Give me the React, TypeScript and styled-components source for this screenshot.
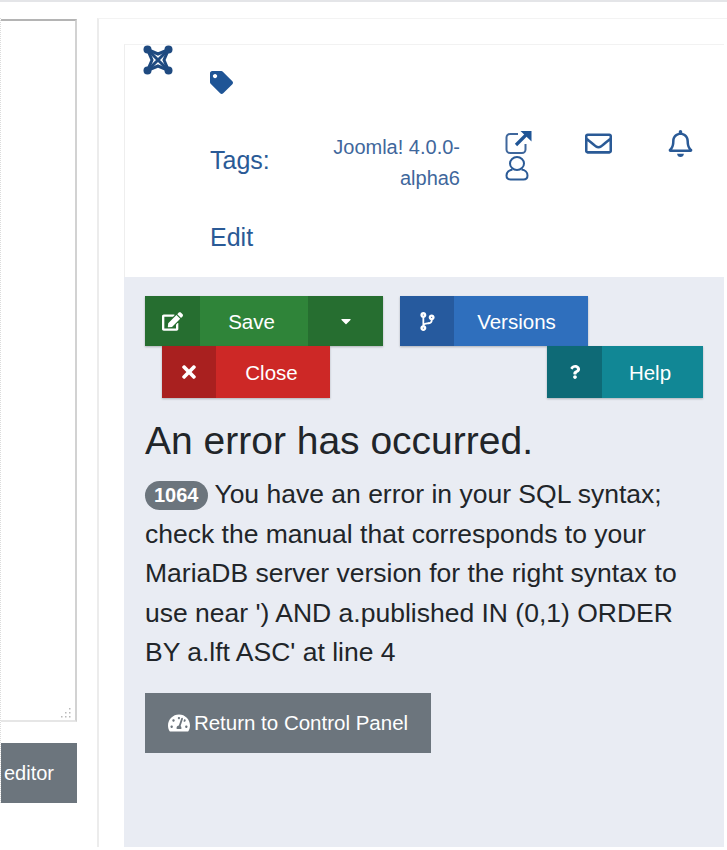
import React from "react";
import styled, { createGlobalStyle } from "styled-components";
import {
  FaEdit,
  FaCaretDown,
  FaTimes,
  FaQuestion,
  FaCodeBranch,
  FaTachometerAlt,
  FaTag,
  FaRegEnvelope,
  FaRegBell,
} from "react-icons/fa";

const GlobalStyle = createGlobalStyle`
  html, body {
    margin: 0;
    padding: 0;
    background: #fff;
    overflow: hidden;
  }
  * {
    box-sizing: border-box;
  }
`;

const JoomlaMark = () => (
  <svg width="30" height="30" viewBox="0 0 30 30" fill="none" stroke="#1f4a80" strokeWidth="3">
    <path d="M4.500 4.500 25.500 25.500M25.500 4.500 4.500 25.500" />
    <path d="M4.500 4.500 15 9 25.500 4.500 21 15 25.500 25.500 15 21 4.500 25.500 9 15Z" />
    <g fill="#1f4a80" stroke="none">
      <circle cx="4.500" cy="4.500" r="4" />
      <circle cx="25.500" cy="4.500" r="4" />
      <circle cx="4.500" cy="25.500" r="4" />
      <circle cx="25.500" cy="25.500" r="4" />
    </g>
  </svg>
);

const ExternalIcon = () => (
  <svg width="27" height="25" viewBox="0 0 27 25" fill="none">
    <path d="M13 4H5a3.500 3.500 0 0 0-3.500 3.500v12A3.500 3.500 0 0 0 5 23h12a3.500 3.500 0 0 0 3.500-3.500V14" stroke="#3f679c" strokeWidth="2" />
    <path d="M11 15 21 5" stroke="#1f5596" strokeWidth="3.200" />
    <path d="M15.500 1H26.500V11.500Z" fill="#1f5596" />
  </svg>
);

const UserIcon = () => (
  <svg width="24" height="25" viewBox="0 0 24 25" fill="none" stroke="#2a5a96" strokeWidth="2">
    <ellipse cx="12" cy="7.500" rx="7" ry="6.500" />
    <path d="M7.500 13.500C4 14 1.500 16.500 1.500 19.500 1.500 22 3 23.500 5.500 23.500H18.500C21 23.500 22.500 22 22.500 19.500 22.500 16.500 20 14 16.500 13.500" />
  </svg>
);

const ResizeGrip = () => (
  <svg width="12" height="12" viewBox="0 0 12 12" fill="#b9b9b9">
    <rect x="9" y="1" width="1.500" height="1.500" />
    <rect x="5" y="5" width="1.500" height="1.500" />
    <rect x="9" y="5" width="1.500" height="1.500" />
    <rect x="1" y="9" width="1.500" height="1.500" />
    <rect x="5" y="9" width="1.500" height="1.500" />
    <rect x="9" y="9" width="1.500" height="1.500" />
  </svg>
);

export default function App() {
  return (
    <>
      <GlobalStyle />
      <Page>
        <LeftColumn>
          <EditorBox>
            <Grip>
              <ResizeGrip />
            </Grip>
          </EditorBox>
          <ToggleButton>editor</ToggleButton>
        </LeftColumn>
        <Frame>
          <Header>
            <Logo>
              <JoomlaMark />
            </Logo>
            <HeaderBody>
              <TagIcon>
                <FaTag size={23} />
              </TagIcon>
              <InfoRow>
                <NavLabel>Tags:</NavLabel>
                <Version>Joomla! 4.0.0-alpha6</Version>
                <IconCell $width={80} $offset={45}>
                  <ExternalIcon />
                  <UserGlyph>
                    <UserIcon />
                  </UserGlyph>
                </IconCell>
                <IconCell $width={82}>
                  <FaRegEnvelope size={27} />
                </IconCell>
                <IconCell $width={27}>
                  <FaRegBell size={27} />
                </IconCell>
              </InfoRow>
              <NavLabel>Edit</NavLabel>
            </HeaderBody>
          </Header>
          <Content>
            <Toolbar>
              <ToolRow $gap={17} $height={50}>
                <ActionButton $body="#2f8439" $tab="#266e30" $width={238}>
                  <IconTab $width={55}><FaEdit size={21} /></IconTab>
                  <Label>Save</Label>
                  <CaretTab>
                    <FaCaretDown size={16} />
                  </CaretTab>
                </ActionButton>
                <ActionButton $body="#2f6fbd" $tab="#265a9e" $width={188}>
                  <IconTab><FaCodeBranch size={19} /></IconTab>
                  <Label $shift={9}>Versions</Label>
                </ActionButton>
              </ToolRow>
              <ToolRow $gap={217} $indent={17} $height={52}>
                <ActionButton $body="#cd2826" $tab="#a9201f" $width={168}>
                  <IconTab><FaTimes size={20} /></IconTab>
                  <Label $shift={3}>Close</Label>
                </ActionButton>
                <ActionButton $body="#118795" $tab="#0e6a76" $width={156}>
                  <IconTab $width={55}><FaQuestion size={14} /></IconTab>
                  <Label>Help</Label>
                </ActionButton>
              </ToolRow>
            </Toolbar>
            <Title>An error has occurred.</Title>
            <Message>
              <Badge>1064</Badge> You have an error in your SQL syntax; check the manual that corresponds to your MariaDB server version for the right syntax to use near ') AND a.published IN (0,1) ORDER BY a.lft ASC' at line 4
            </Message>
            <ReturnButton>
              <FaTachometerAlt size={22} />
              Return to Control Panel
            </ReturnButton>
          </Content>
        </Frame>
      </Page>
    </>
  );
}

const Page = styled.div`
  display: flex;
  width: 727px;
  height: 850px;
  padding-top: 16px;
  border-top: 2px solid #e4e5e8;
  background: #fff;
  font-family: "Liberation Sans", Arial, sans-serif;
  overflow: hidden;
`;

const LeftColumn = styled.div`
  display: flex;
  flex-direction: column;
  width: 77px;
  height: 785px;
  border-left: 1px dotted #dcdcdc;
  flex-shrink: 0;
`;

const EditorBox = styled.div`
  display: flex;
  align-items: flex-end;
  justify-content: flex-end;
  height: 704px;
  margin-top: 1px;
  border-top: 2px solid #b4b4b4;
  border-right: 2px solid #d2d2d2;
  border-bottom: 2px solid #e6e6e6;
  padding: 0 3px 1px 0;
`;

const Grip = styled.div`
  display: flex;
`;

const ToggleButton = styled.div`
  display: flex;
  align-items: center;
  height: 60px;
  margin-top: 21px;
  padding-left: 3px;
  background: #6c757d;
  color: #fff;
  font-size: 20px;
`;

const Frame = styled.div`
  display: flex;
  flex-direction: column;
  width: 630px;
  height: 829px;
  margin-left: 20px;
  padding: 25px 0 0 25px;
  border-left: 2px solid #ececec;
  border-top: 1px solid #f3f3f3;
`;

const Header = styled.header`
  display: flex;
  width: 600px;
  height: 233px;
  border-top: 1px solid #f2f2f2;
  border-left: 1px solid #eeeeee;
  background: #fff;
  color: #1f5596;
`;

const Logo = styled.div`
  display: flex;
  align-items: flex-start;
  width: 85px;
  padding-left: 18px;
`;

const HeaderBody = styled.div`
  display: flex;
  flex-direction: column;
  align-items: flex-start;
  flex: 1;
`;

const TagIcon = styled.div`
  display: flex;
  height: 85px;
  padding-top: 26px;
  color: #1f5596;
`;

const InfoRow = styled.div`
  display: flex;
  align-items: flex-start;
  height: 77px;
`;

const NavLabel = styled.div`
  width: 90px;
  padding-top: 14px;
  color: #2a5a96;
  font-size: 25px;
  line-height: 32px;
`;

const Version = styled.div`
  width: 160px;
  padding-top: 2px;
  text-align: right;
  color: #3f679c;
  font-size: 20px;
  line-height: 31px;
`;

const IconCell = styled.div<{ $width: number; $offset?: number }>`
  display: flex;
  flex-direction: column;
  align-items: flex-start;
  width: ${({ $width }) => $width}px;
  margin-left: ${({ $offset }) => $offset ?? 0}px;
  color: #2a5a96;
`;

const UserGlyph = styled.div`
  display: flex;
  margin-top: 1px;
`;

const Content = styled.main`
  width: 600px;
  height: 570px;
  padding: 19px 21px 0 21px;
  background: #e9ecf3;
`;

const Toolbar = styled.div`
  display: flex;
  flex-direction: column;
`;

const ToolRow = styled.div<{ $gap: number; $indent?: number; $height: number }>`
  display: flex;
  gap: ${({ $gap }) => $gap}px;
  height: ${({ $height }) => $height}px;
  padding-left: ${({ $indent }) => $indent ?? 0}px;
`;

const ActionButton = styled.div<{ $body: string; $tab: string; $width: number }>`
  display: flex;
  align-items: stretch;
  width: ${({ $width }) => $width}px;
  background: ${({ $body }) => $body};
  color: #fff;
  box-shadow: 0 1px 2px rgba(0, 0, 0, 0.25);
  --tab: ${({ $tab }) => $tab};
`;

const IconTab = styled.span<{ $width?: number }>`
  display: flex;
  align-items: center;
  justify-content: center;
  width: ${({ $width }) => $width ?? 54}px;
  flex-shrink: 0;
  background: var(--tab);
`;

const Label = styled.span<{ $shift?: number }>`
  display: flex;
  flex: 1;
  align-items: center;
  justify-content: center;
  padding: 2px ${({ $shift }) => $shift ?? 5}px 0 0;
  font-size: 20.500px;
`;

const CaretTab = styled.span`
  display: flex;
  align-items: center;
  justify-content: center;
  width: 75px;
  background: var(--tab);
`;

const Title = styled.h1`
  margin: 21px 0 0;
  color: #212529;
  font-size: 39px;
  font-weight: 400;
  line-height: 44px;
`;

const Message = styled.div`
  width: 556px;
  margin-top: 12px;
  color: #212529;
  font-size: 26.500px;
  line-height: 39.500px;
`;

const Badge = styled.span`
  display: inline-block;
  padding: 3px 9px 4px;
  border-radius: 15px;
  background: #6c757d;
  color: #fff;
  font-size: 20px;
  font-weight: 700;
  line-height: 22px;
  vertical-align: 1px;
`;

const ReturnButton = styled.div`
  display: flex;
  align-items: center;
  justify-content: center;
  gap: 4px;
  width: 286px;
  height: 60px;
  margin-top: 20px;
  background: #6c757d;
  color: #fff;
  font-size: 20.500px;
`;
